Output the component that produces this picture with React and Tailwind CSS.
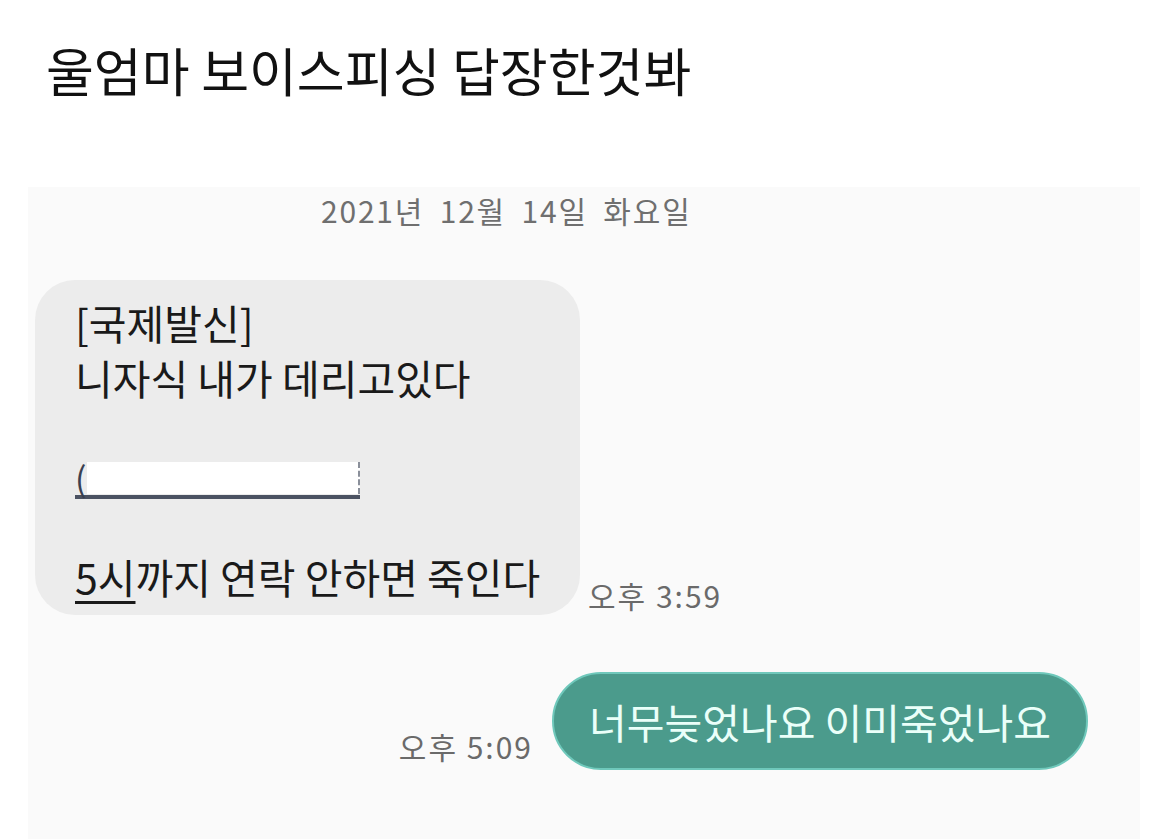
import React from "react";

const KR = { fontFamily: '"Noto Sans CJK KR", "Noto Sans", sans-serif' };

export default function App() {
  return (
    <div className="w-[1170px] h-[839px] bg-white overflow-hidden flex flex-col" style={KR}>
      <h1 className="pl-[46px] pt-[38px] text-[52px] leading-[64px] tracking-[0px] text-[#111] font-normal">
        울엄마 보이스피싱 답장한것봐
      </h1>
      <div className="ml-[28px] mt-[85px] w-[1112px] flex-1 bg-[#fafafa] flex flex-col">
        <div className="pl-[293px] pt-[3px] text-[30px] leading-[40px] text-[#6f6f6f] tracking-[1.8px] [word-spacing:7px]">
          2021년 12월 14일 화요일
        </div>
        <div className="mt-[50px] ml-[7px] flex items-end">
          <div className="w-[545px] h-[335px] rounded-[40px] bg-[#ececec] pl-[40px] pt-[15px] text-[41px] leading-[55px] text-[#1a1a1a]">
            <div>[국제발신]</div>
            <div>니자식 내가 데리고있다</div>
            <div className="mt-[54px] flex items-end w-[285px] border-b-[4px] border-[#4b5262] h-[40px]">
              <span className="text-[#3a4050] leading-[34px] text-[34px]">(</span>
              <span className="flex-1 h-[32px] bg-white mb-[1px] border-r-[2px] border-dashed border-[#8a8f9a]"></span>
            </div>
            <div className="mt-[50px]">
              <span className="underline decoration-[3px] underline-offset-[7px]">5시</span>까지 연락 안하면 죽인다
            </div>
          </div>
          <div className="ml-[8px] mb-[2px] text-[30px] leading-[36px] text-[#6a6a6a] tracking-[2px]">
            오후 3:59
          </div>
        </div>
        <div className="mt-[57px] mr-[52px] flex items-end justify-end">
          <div className="mr-[19px] mb-[6px] text-[30px] leading-[36px] text-[#6a6a6a] tracking-[2px]">
            오후 5:09
          </div>
          <div className="w-[536px] h-[98px] rounded-full bg-[#4b9b8c] border-[2px] border-[#6fc8bb] flex items-center justify-center text-[41px] text-[#eafff9] leading-none">
            너무늦었나요 이미죽었나요
          </div>
        </div>
      </div>
    </div>
  );
}
